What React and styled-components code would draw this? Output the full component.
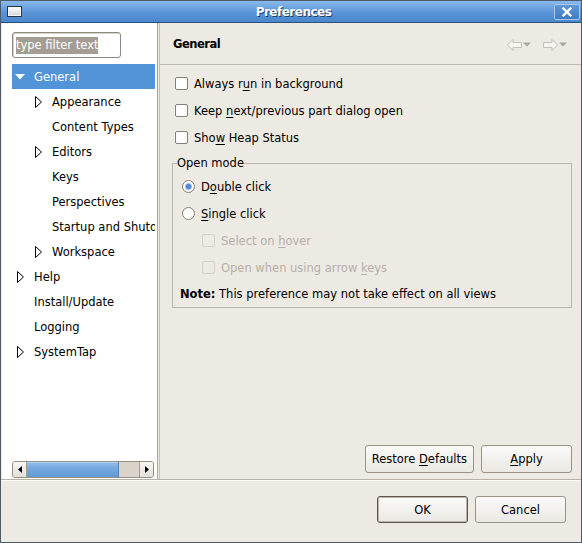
import React from 'react';
import styled, { createGlobalStyle, css } from 'styled-components';

const Global = createGlobalStyle`
  html, body { margin: 0; padding: 0; background: #ede9e3; }
  body { font-family: "DejaVu Sans", "Noto Sans", sans-serif; }
  * { box-sizing: border-box; }
`;

const Window = styled.div`
  width: 582px;
  height: 543px;
  display: flex;
  flex-direction: column;
  background: #ede9e3;
  border: 1px solid #4d5b6d;
  font-family: "DejaVu Sans", sans-serif;
  font-size: 11.5px;
  color: #000;
`;

const TitleBar = styled.div`
  height: 22px;
  flex: none;
  display: grid;
  grid-template-columns: 40px 1fr 40px;
  align-items: center;
  padding: 0 1px 0 6px;
  background: linear-gradient(to bottom, #8cb9ea 0%, #6aa2e0 35%, #5892d6 60%, #4a87cc 100%);
  border-bottom: 1px solid #2d4f79;
`;

const TitleIcon = styled.div`
  width: 15px;
  height: 11px;
  border: 1px solid #2b3440;
  background: linear-gradient(to bottom, #ffffff, #d4d4d4);
  box-shadow: inset 0 0 0 1px #f4f4f4;
`;

const TitleText = styled.div`
  text-align: center;
  color: #fff;
  font-weight: bold;
  font-size: 12px;
  letter-spacing: -0.5px;
  text-shadow: 1px 1px 0 #1f3e66;
`;

const CloseButton = styled.div`
  justify-self: end;
  width: 26px;
  height: 16px;
  border: 1px solid #a9c8ec;
  border-radius: 2px;
  background: linear-gradient(to bottom, #5f97d6, #3f7cc2);
  display: flex;
  align-items: center;
  justify-content: center;
`;

const Main = styled.div`
  height: 456px;
  flex: none;
  display: flex;
  padding-left: 1px;
`;

const LeftPanel = styled.div`
  width: 155px;
  background: #fff;
  display: flex;
  flex-direction: column;
  padding: 9px 2px 0 10px;
`;

const FilterBox = styled.div`
  width: 109px;
  height: 26px;
  flex: none;
  border: 1px solid #8e887e;
  border-radius: 3px;
  background: #fff;
  display: flex;
  align-items: center;
  padding-left: 3px;
  box-shadow: inset 1px 1px 0 #d8d4ce;
`;

const Selected = styled.span`
  background: #a39d94;
  color: #fff;
  line-height: 17px;
  font-size: 11.5px;
`;

const Tree = styled.div`
  flex: 1;
  margin-top: 6px;
  overflow: hidden;
  display: flex;
  flex-direction: column;
`;

const Row = styled.div`
  height: 25px;
  flex: none;
  display: flex;
  align-items: center;
  white-space: nowrap;
  overflow: hidden;
  padding-left: ${p => p.$level * 18}px;
  ${p => p.$selected && css`
    background: #5294d8;
    color: #fff;
  `}
`;

const ExpSlot = styled.span`
  width: 16px;
  flex: none;
  display: flex;
  justify-content: center;
  align-items: center;
`;

const RowLabel = styled.span`
  margin-left: 6px;
`;

const HScroll = styled.div`
  height: 17px;
  flex: none;
  margin: 0 1px 1px 0;
  display: flex;
  border: 1px solid #958e83;
  border-radius: 3px;
  background: #d9d3ca;
  overflow: hidden;
`;

const ScrollBtn = styled.div`
  width: 14px;
  flex: none;
  display: flex;
  align-items: center;
  justify-content: center;
  background: linear-gradient(to bottom, #f7f6f3, #e4e0da);
  ${p => p.$side === 'left' ? css`border-right: 1px solid #a49d92;` : css`border-left: 1px solid #a49d92;`}
`;

const Thumb = styled.div`
  width: 92px;
  flex: none;
  background: linear-gradient(to bottom, #93bdea, #72a6de 50%, #6599d4);
  border-right: 1px solid #4e82c0;
  box-shadow: inset 0 1px 0 #b3d0f0;
`;

const Trough = styled.div`
  flex: 1;
`;

const Sash = styled.div`
  width: 3px;
  flex: none;
  border-left: 1px solid #aaa49b;
  border-right: 1px solid #c4beb5;
`;

const RightPanel = styled.div`
  flex: 1;
  display: flex;
  flex-direction: column;
`;

const Header = styled.div`
  height: 42px;
  flex: none;
  display: flex;
  align-items: center;
  justify-content: space-between;
  padding: 0 13px 0 13px;
  border-bottom: 1px solid #bdb7ae;
`;

const HeaderTitle = styled.div`
  font-weight: bold;
  font-size: 11.5px;
  letter-spacing: -0.5px;
`;

const NavGroup = styled.div`
  display: flex;
  gap: 11px;
  align-items: center;
  margin-top: 2px;
`;

const Content = styled.div`
  flex: 1;
  display: flex;
  flex-direction: column;
  padding: 5px 9px 6px 12px;
`;

const OptionRow = styled.label`
  height: 27px;
  flex: none;
  display: flex;
  align-items: center;
  gap: 6px;
  padding-left: ${p => p.$indent || 3}px;
  color: ${p => (p.$disabled ? '#b5b0a8' : '#000')};
  white-space: nowrap;
`;

const Text = styled.span`
  white-space: pre;
`;

const CheckBox = styled.span`
  width: 13px;
  height: 13px;
  flex: none;
  border: 1px solid ${p => (p.$disabled ? '#d5d0c9' : '#857f76')};
  border-radius: 2px;
  background: ${p => (p.$disabled ? '#ede9e3' : '#fff')};
`;

const Radio = styled.span`
  width: 13px;
  height: 13px;
  flex: none;
  border-radius: 50%;
  border: 1px solid #857f76;
  background: #fff;
  display: flex;
  align-items: center;
  justify-content: center;
  &::after {
    content: '';
    display: ${p => (p.$checked ? 'block' : 'none')};
    width: 5px;
    height: 5px;
    border-radius: 50%;
    background: #4a89cf;
    box-shadow: 0 0 0 1px #9cc0e8;
  }
`;

const Mn = styled.span`
  text-decoration: underline;
  text-underline-offset: 2px;
`;

const Group = styled.fieldset`
  margin: 5px 0 0 0;
  padding: 3px 8px 1px 9px;
  border: 1px solid #bab4ab;
  border-radius: 0;
  min-width: 0;
`;

const Legend = styled.legend`
  margin-left: -5px;
  padding: 0;
  line-height: 14px;
`;

const GroupRow = styled.div`
  height: 27px;
  display: flex;
  align-items: center;
  gap: 6px;
  padding-left: ${p => p.$indent || 0}px;
  color: ${p => (p.$disabled ? '#b5b0a8' : '#000')};
  white-space: nowrap;
`;

const Note = styled.div`
  height: 25px;
  display: flex;
  align-items: center;
  margin-left: -2px;
  white-space: pre;
`;

const Spacer = styled.div`
  flex: 1;
`;

const ButtonRow = styled.div`
  display: flex;
  justify-content: flex-end;
  gap: 7px;
`;

const Button = styled.div`
  height: ${p => p.$h || 28}px;
  min-width: 91px;
  padding: 0 6px;
  display: flex;
  align-items: center;
  justify-content: center;
  border: 1px solid #9a9388;
  border-radius: 3px;
  background: linear-gradient(to bottom, #fbfaf9, #ebe8e3);
  white-space: pre;
  ${p => p.$default && css`
    border-color: #5d564d;
    box-shadow: inset 0 0 0 1px #b9b3aa;
  `}
`;

const BottomBar = styled.div`
  flex: 1;
  border-top: 1px solid #b6b0a7;
  box-shadow: inset 0 1px 0 #fbfaf8;
  padding: 16px 15px 0 0;
`;

const DownTri = () => (
  <svg width="10" height="6" viewBox="0 0 10 6"><polygon points="0,0 10,0 5,5.5" fill="currentColor" /></svg>
);
const RightTri = () => (
  <svg width="7" height="12" viewBox="0 0 7 12"><polygon points="0.5,0.5 6.5,6 0.5,11.5" fill="#fff" stroke="#000" strokeWidth="1" /></svg>
);

const NavArrow = ({ dir }) => (
  <svg width="25" height="12" viewBox="0 0 25 12">
    {dir === 'left' ? (
      <polygon points="0.5,6 6,0.5 6,3.5 14.5,3.5 14.5,8.5 6,8.5 6,11.5" fill="#f6f5f2" stroke="#c3beb6" />
    ) : (
      <polygon points="14.5,6 9,0.5 9,3.5 0.5,3.5 0.5,8.5 9,8.5 9,11.5" fill="#f6f5f2" stroke="#c3beb6" />
    )}
    <polygon points="16,3.5 24,3.5 20,7.5" fill="#a9a49c" />
  </svg>
);

const tree = [
  { label: 'General', level: 0, exp: 'down', selected: true },
  { label: 'Appearance', level: 1, exp: 'right' },
  { label: 'Content Types', level: 1 },
  { label: 'Editors', level: 1, exp: 'right' },
  { label: 'Keys', level: 1 },
  { label: 'Perspectives', level: 1 },
  { label: 'Startup and Shutdown', level: 1 },
  { label: 'Workspace', level: 1, exp: 'right' },
  { label: 'Help', level: 0, exp: 'right' },
  { label: 'Install/Update', level: 0 },
  { label: 'Logging', level: 0 },
  { label: 'SystemTap', level: 0, exp: 'right' },
];

export default function App() {
  return (
    <>
      <Global />
      <Window>
        <TitleBar>
          <TitleIcon />
          <TitleText>Preferences</TitleText>
          <CloseButton>
            <svg width="10" height="10" viewBox="0 0 10 10">
              <path d="M1.5 1.5 L8.5 8.5 M8.5 1.5 L1.5 8.5" stroke="#fff" strokeWidth="2.4" strokeLinecap="square" />
            </svg>
          </CloseButton>
        </TitleBar>
        <Main>
          <LeftPanel>
            <FilterBox><Selected>type filter text</Selected></FilterBox>
            <Tree>
              {tree.map(t => (
                <Row key={t.label} $level={t.level} $selected={t.selected}>
                  <ExpSlot>{t.exp === 'down' ? <DownTri /> : t.exp === 'right' ? <RightTri /> : null}</ExpSlot>
                  <RowLabel>{t.label}</RowLabel>
                </Row>
              ))}
            </Tree>
            <HScroll>
              <ScrollBtn $side="left">
                <svg width="4" height="7" viewBox="0 0 4 7"><polygon points="4,0 4,7 0,3.5" fill="#000" /></svg>
              </ScrollBtn>
              <Thumb />
              <Trough />
              <ScrollBtn $side="right">
                <svg width="4" height="7" viewBox="0 0 4 7"><polygon points="0,0 0,7 4,3.5" fill="#000" /></svg>
              </ScrollBtn>
            </HScroll>
          </LeftPanel>
          <Sash />
          <RightPanel>
            <Header>
              <HeaderTitle>General</HeaderTitle>
              <NavGroup>
                <NavArrow dir="left" />
                <NavArrow dir="right" />
              </NavGroup>
            </Header>
            <Content>
              <OptionRow><CheckBox /><Text>Always r<Mn>u</Mn>n in background</Text></OptionRow>
              <OptionRow><CheckBox /><Text>Keep <Mn>n</Mn>ext/previous part dialog open</Text></OptionRow>
              <OptionRow><CheckBox /><Text>Sho<Mn>w</Mn> Heap Status</Text></OptionRow>
              <Group>
                <Legend>Open mode</Legend>
                <GroupRow><Radio $checked /><Text>D<Mn>o</Mn>uble click</Text></GroupRow>
                <GroupRow><Radio /><Text><Mn>S</Mn>ingle click</Text></GroupRow>
                <GroupRow $indent={20} $disabled><CheckBox $disabled /><Text>Select on <Mn>h</Mn>over</Text></GroupRow>
                <GroupRow $indent={20} $disabled><CheckBox $disabled /><Text>Open when using arrow <Mn>k</Mn>eys</Text></GroupRow>
                <Note><Text><b>Note:</b> This preference may not take effect on all views</Text></Note>
              </Group>
              <Spacer />
              <ButtonRow>
                <Button><Text>Restore <Mn>D</Mn>efaults</Text></Button>
                <Button><Text><Mn>A</Mn>pply</Text></Button>
              </ButtonRow>
            </Content>
          </RightPanel>
        </Main>
        <BottomBar>
          <ButtonRow>
            <Button $default $h={27}>OK</Button>
            <Button $h={27}>Cancel</Button>
          </ButtonRow>
        </BottomBar>
      </Window>
    </>
  );
}
